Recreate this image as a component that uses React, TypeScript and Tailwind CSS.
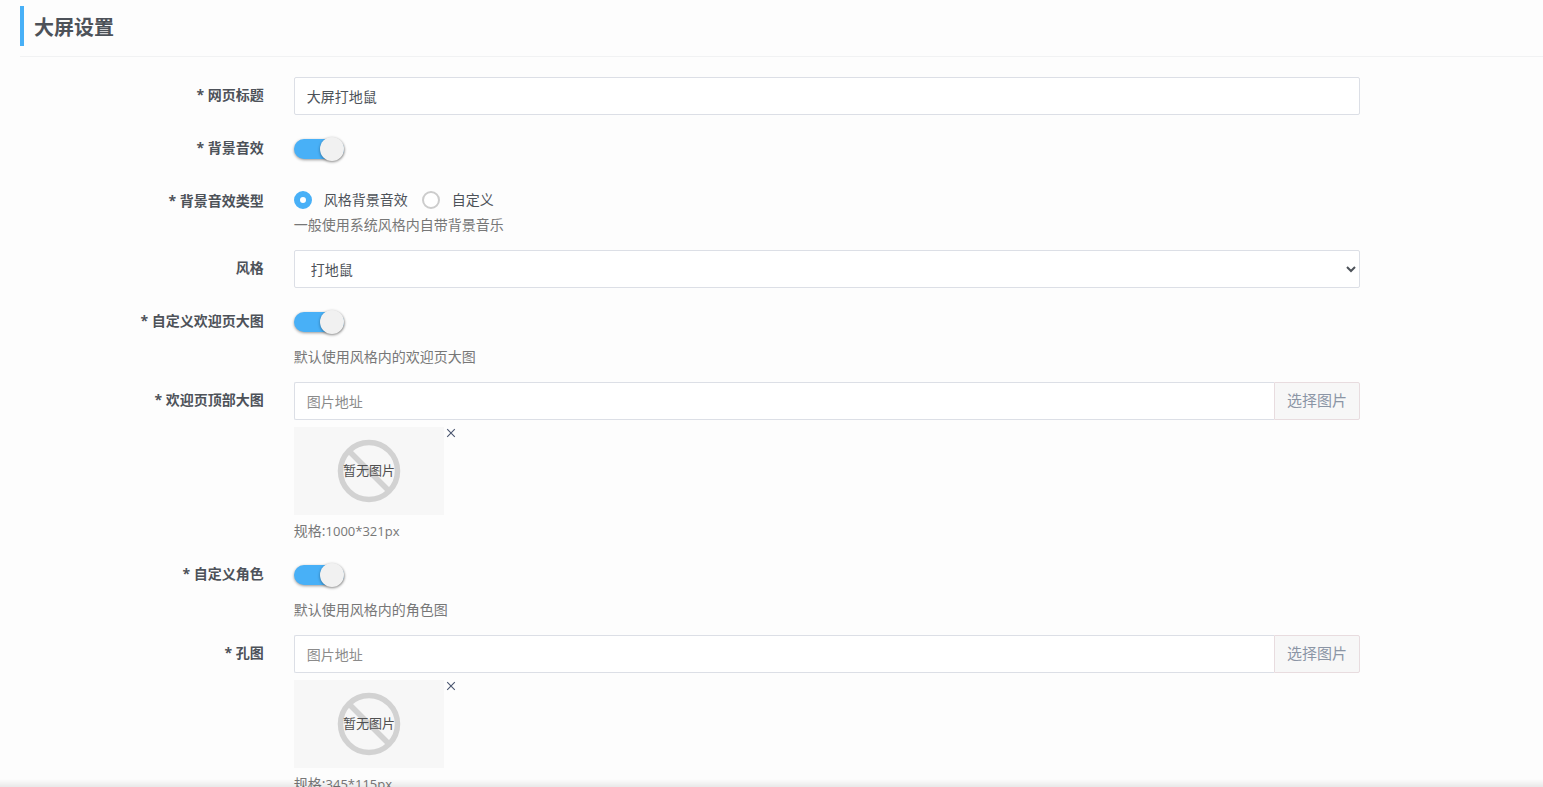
import { useState, type ReactNode } from 'react';

const inputClass =
  'h-[38px] w-full min-w-0 rounded-[2px] border border-[#dcdfe6] bg-white px-3 text-sm text-[#4d5259] outline-none placeholder:text-[#8b8b8b] focus:border-[#48b0f7]';

function Row({ label, htmlFor, required = true, children }: { label: string; htmlFor: string; required?: boolean; children: ReactNode }) {
  return (
    <div className="flex items-start">
      <label htmlFor={htmlFor} className="w-1/6 shrink-0 pt-2 pr-[10px] text-right text-sm leading-5 font-bold text-[#4d5259]">
        {required ? '* ' : ''}
        {label}
      </label>
      <div className="ml-5 w-[70%]">{children}</div>
    </div>
  );
}

function Help({ children }: { children: ReactNode }) {
  return <p className="text-sm leading-5 text-[#777777]">{children}</p>;
}

function Switch({ id }: { id: string }) {
  return (
    <div className="flex h-[38px] items-center">
      <input
        id={id}
        type="checkbox"
        role="switch"
        defaultChecked
        className="flex h-5 w-[50px] cursor-pointer appearance-none items-center rounded-full bg-[#d0d0d0] shadow-[0_1px_3px_rgba(0,0,0,0.4)] before:block before:size-6 before:shrink-0 before:rounded-full before:bg-[#f1f1f1] before:shadow-[0_1px_3px_rgba(0,0,0,0.4)] before:content-[''] checked:bg-[#48b0f7] checked:before:ml-[26px]"
      />
    </div>
  );
}

function Radio({ id, label, checked, onChange }: { id: string; label: string; checked: boolean; onChange: () => void }) {
  return (
    <label htmlFor={id} className="flex cursor-pointer items-center gap-3 text-sm leading-5 text-[#4d5259]">
      <input
        id={id}
        type="radio"
        name="music-type"
        checked={checked}
        onChange={onChange}
        className="size-[18px] cursor-pointer appearance-none rounded-full border-2 border-[#cccccc] bg-white checked:border-[6px] checked:border-[#48b0f7]"
      />
      {label}
    </label>
  );
}

function EmptyPicture() {
  return (
    <svg viewBox="0 0 150 88" className="h-[88px] w-[150px]" role="img" aria-label="暂无图片">
      <rect width="150" height="88" fill="#f7f7f7" />
      <g fill="none" stroke="#d2d2d2" strokeWidth="5.5">
        <circle cx="75" cy="44" r="28.5" />
        <path d="M54.5 23.5 95.5 64.5" />
      </g>
      <text x="75" y="48" textAnchor="middle" fontSize="13" fill="#505050">
        暂无图片
      </text>
    </svg>
  );
}

function PictureField({ id, size }: { id: string; size: string }) {
  return (
    <>
      <div className="flex">
        <input id={id} type="text" placeholder="图片地址" className={inputClass + ' rounded-r-none border-r-0'} />
        <button
          type="button"
          className="h-[38px] shrink-0 cursor-pointer rounded-r-[2px] border border-[#e8dcdf] bg-[#f7f7f7] px-3 pb-0.5 text-[15px] text-[#8b95a5]"
        >
          选择图片
        </button>
      </div>
      <div className="mt-[7px] mb-1.5 flex items-start">
        <EmptyPicture />
        <button type="button" aria-label="删除" className="cursor-pointer px-0.5 py-px text-[#4a5670]">
          <svg viewBox="0 0 10 10" className="size-[10px]" fill="none" stroke="currentColor" strokeWidth="1.1">
            <path d="M1.2 1.2 8.8 8.8M8.8 1.2 1.2 8.8" />
          </svg>
        </button>
      </div>
      <Help>
        规格:<span className="text-[13px]">{size}</span>
      </Help>
    </>
  );
}

export default function App() {
  const [music, setMusic] = useState('style');
  return (
    <div className="h-screen overflow-y-auto bg-[#fdfdfd] pl-5 font-['Open_Sans','Noto_Sans_CJK_SC',sans-serif] [scrollbar-width:none]">
      <header className="border-b border-[#f1f2f3] pt-1.5 pb-[10px]">
        <h1 className="border-l-4 border-[#48b0f7] pt-1 pl-[10px] text-xl leading-9 font-bold text-[#4d5259]">大屏设置</h1>
      </header>
      <form className="flex flex-col gap-[15px] pt-5">
        <Row label="网页标题" htmlFor="title">
          <input id="title" type="text" defaultValue="大屏打地鼠" className={inputClass} />
        </Row>
        <Row label="背景音效" htmlFor="music">
          <Switch id="music" />
        </Row>
        <Row label="背景音效类型" htmlFor="music-style">
          <div className="flex h-8 items-center gap-[14px] pt-0.5">
            <Radio id="music-style" label="风格背景音效" checked={music === 'style'} onChange={() => setMusic('style')} />
            <Radio id="music-custom" label="自定义" checked={music === 'custom'} onChange={() => setMusic('custom')} />
          </div>
          <Help>一般使用系统风格内自带背景音乐</Help>
        </Row>
        <Row label="风格" htmlFor="style" required={false}>
          <select id="style" className={inputClass}>
            <option>打地鼠</option>
          </select>
        </Row>
        <Row label="自定义欢迎页大图" htmlFor="welcome">
          <div className="mb-1.5">
            <Switch id="welcome" />
          </div>
          <Help>默认使用风格内的欢迎页大图</Help>
        </Row>
        <Row label="欢迎页顶部大图" htmlFor="welcome-picture">
          <PictureField id="welcome-picture" size="1000*321px" />
        </Row>
        <Row label="自定义角色" htmlFor="role">
          <div className="mb-1.5">
            <Switch id="role" />
          </div>
          <Help>默认使用风格内的角色图</Help>
        </Row>
        <Row label="孔图" htmlFor="hole-picture">
          <PictureField id="hole-picture" size="345*115px" />
        </Row>
      </form>
      <div className="pointer-events-none fixed inset-x-0 bottom-0 h-2 bg-gradient-to-b from-transparent to-black/8" />
    </div>
  );
}
